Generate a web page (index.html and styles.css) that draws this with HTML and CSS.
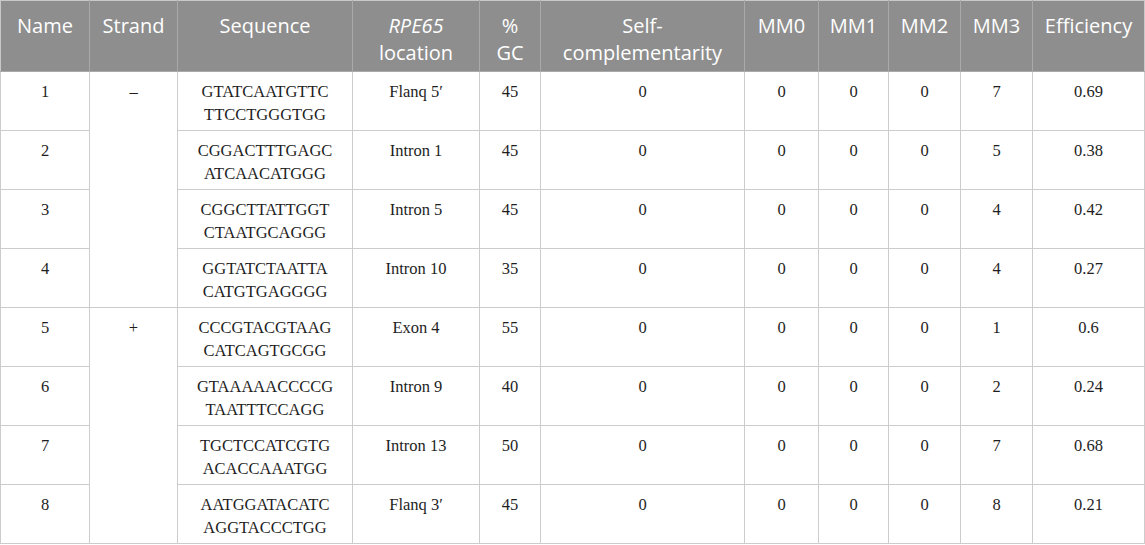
FILE: index.html
```html
<!DOCTYPE html>
<html>
<head>
<meta charset="utf-8">
<link rel="stylesheet" href="styles.css">
</head>
<body>
<table class="grid">
  <colgroup>
    <col class="c-name"><col class="c-strand"><col class="c-seq"><col class="c-loc"><col class="c-gc"><col class="c-self"><col class="c-mm"><col class="c-mm1"><col class="c-mm2"><col class="c-mm3"><col class="c-eff">
  </colgroup>
  <thead>
    <tr>
      <th>Name</th><th>Strand</th><th>Sequence</th><th><i>RPE65</i><br>location</th><th>%<br>GC</th><th>Self-<br>complementarity</th><th>MM0</th><th>MM1</th><th>MM2</th><th>MM3</th><th>Efficiency</th>
    </tr>
  </thead>
  <tbody>
    <tr><td>1</td><td rowspan="4">–</td><td>GTATCAATGTTC<br>TTCCTGGGTGG</td><td>Flanq 5′</td><td>45</td><td>0</td><td>0</td><td>0</td><td>0</td><td>7</td><td>0.69</td></tr>
    <tr><td>2</td><td>CGGACTTTGAGC<br>ATCAACATGGG</td><td>Intron 1</td><td>45</td><td>0</td><td>0</td><td>0</td><td>0</td><td>5</td><td>0.38</td></tr>
    <tr><td>3</td><td>CGGCTTATTGGT<br>CTAATGCAGGG</td><td>Intron 5</td><td>45</td><td>0</td><td>0</td><td>0</td><td>0</td><td>4</td><td>0.42</td></tr>
    <tr><td>4</td><td>GGTATCTAATTA<br>CATGTGAGGGG</td><td>Intron 10</td><td>35</td><td>0</td><td>0</td><td>0</td><td>0</td><td>4</td><td>0.27</td></tr>
    <tr><td>5</td><td rowspan="4">+</td><td>CCCGTACGTAAG<br>CATCAGTGCGG</td><td>Exon 4</td><td>55</td><td>0</td><td>0</td><td>0</td><td>0</td><td>1</td><td>0.6</td></tr>
    <tr><td>6</td><td>GTAAAAACCCCG<br>TAATTTCCAGG</td><td>Intron 9</td><td>40</td><td>0</td><td>0</td><td>0</td><td>0</td><td>2</td><td>0.24</td></tr>
    <tr><td>7</td><td>TGCTCCATCGTG<br>ACACCAAATGG</td><td>Intron 13</td><td>50</td><td>0</td><td>0</td><td>0</td><td>0</td><td>7</td><td>0.68</td></tr>
    <tr><td>8</td><td>AATGGATACATC<br>AGGTACCCTGG</td><td>Flanq 3′</td><td>45</td><td>0</td><td>0</td><td>0</td><td>0</td><td>8</td><td>0.21</td></tr>
  </tbody>
</table>
</body>
</html>
```

FILE: styles.css
```css
html, body {
  margin: 0;
  padding: 0;
  background: #ffffff;
}

.grid {
  border-collapse: collapse;
  table-layout: fixed;
  width: 1145px;
}

.c-name { width: 89px; }
.c-strand { width: 88px; }
.c-seq { width: 175px; }
.c-loc { width: 127px; }
.c-gc { width: 61px; }
.c-self { width: 204px; }
.c-mm { width: 74px; }
.c-mm1 { width: 70px; }
.c-mm2 { width: 72px; }
.c-mm3 { width: 72px; }
.c-eff { width: 112px; }

.grid th {
  background: #8e8e8e;
  color: #ffffff;
  font-family: "Open Sans", "Noto Sans", sans-serif;
  font-weight: 400;
  font-size: 20px;
  line-height: 27px;
  height: 71px;
  box-sizing: border-box;
  padding: 11px 2px 0;
  vertical-align: top;
  text-align: center;
  border: 1px solid #a9a9a9;
  border-top: 1px solid #c8c8c8;
}

.grid th:first-child { border-left-color: #c8c8c8; }
.grid th:last-child { border-right-color: #c8c8c8; }

.grid td {
  font-family: "Liberation Serif", "Times New Roman", serif;
  font-size: 16.5px;
  line-height: 23px;
  color: #1e1e1e;
  height: 59px;
  box-sizing: border-box;
  padding: 8px 4px 0;
  vertical-align: top;
  text-align: center;
  border: 1px solid #cccccc;
}
```
